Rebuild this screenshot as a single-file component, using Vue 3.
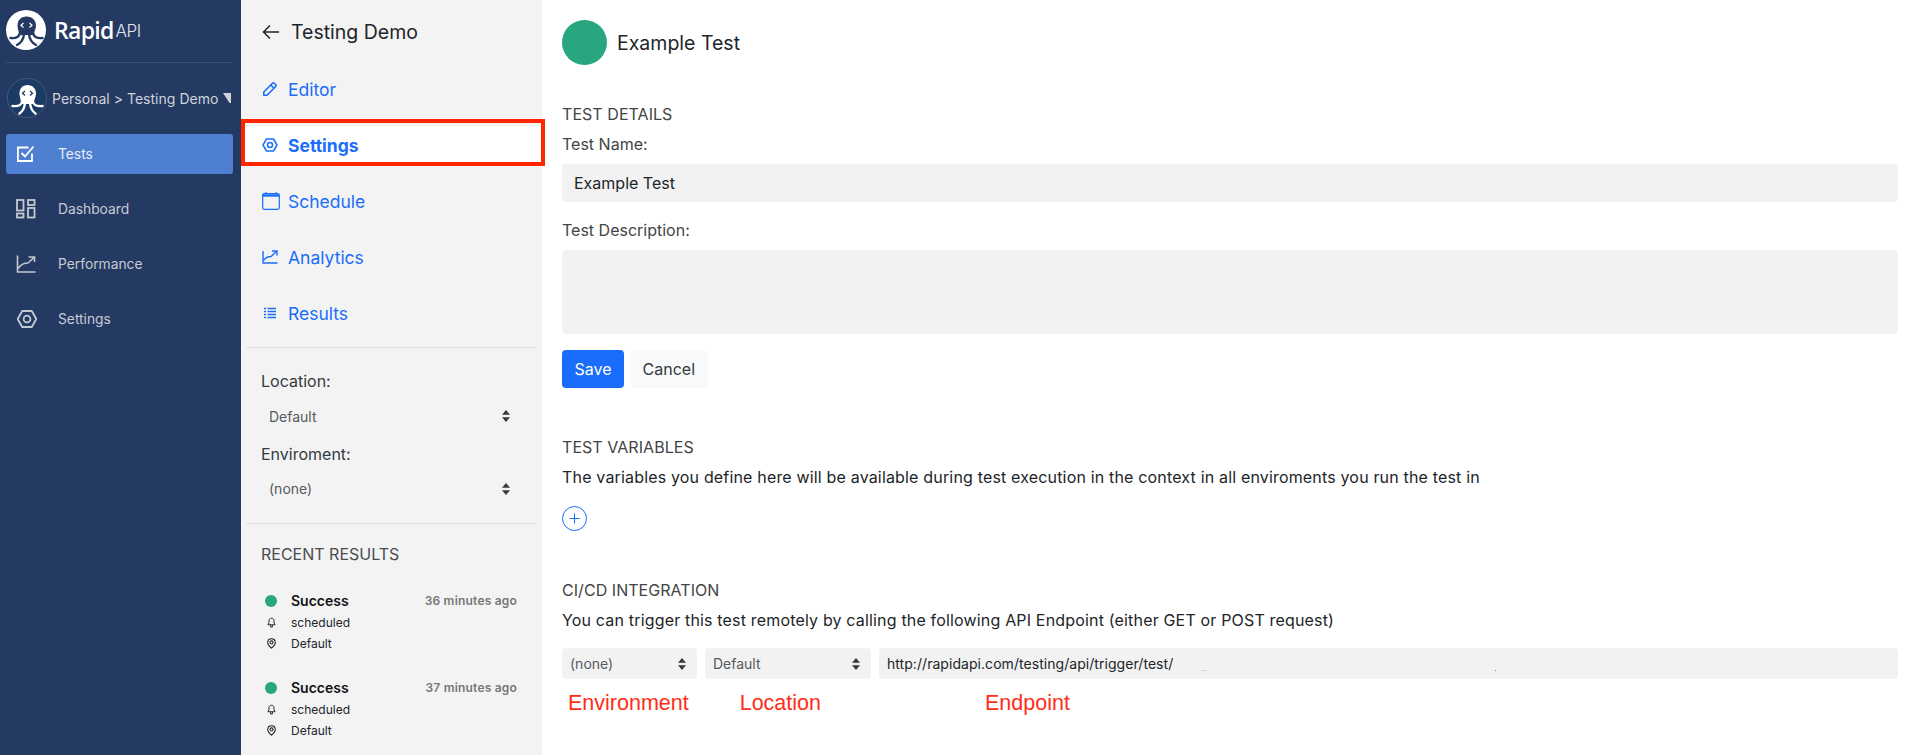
<script setup>
const navItems = [
  { label: 'Tests', icon: 'check', active: true },
  { label: 'Dashboard', icon: 'grid' },
  { label: 'Performance', icon: 'chart' },
  { label: 'Settings', icon: 'hex' },
]
const panelItems = [
  { label: 'Editor', icon: 'pencil' },
  { label: 'Settings', icon: 'hex', active: true },
  { label: 'Schedule', icon: 'calendar' },
  { label: 'Analytics', icon: 'chart' },
  { label: 'Results', icon: 'list' },
]
const results = [
  { status: 'Success', when: '36 minutes ago', trigger: 'scheduled', location: 'Default' },
  { status: 'Success', when: '37 minutes ago', trigger: 'scheduled', location: 'Default' },
]
</script>

<template>
  <div class="app">
    <aside class="sidebar">
      <div class="brand">
        <svg class="logo" viewBox="0 0 40 40">
          <circle cx="20" cy="20" r="20" fill="#fff" />
          <path d="M20.500 6.500C14.500 6.500 11.500 10.500 11.500 15.500C11.500 19 13 21 13 25H28C28 21 30 19 30 15.500C30 10.500 26.500 6.500 20.500 6.500Z" fill="#243a63" />
          <g fill="none" stroke="#243a63" stroke-width="2.400" stroke-linecap="round">
            <path d="M14 23C13 27.500 9 28.500 4.500 28" />
            <path d="M27 23C28 27.500 32 28.500 36.500 28" />
            <path d="M18 24C17.500 30 15 33 11 35" />
            <path d="M23 24C23.500 30 26 33 30 35" />
          </g>
          <g fill="none" stroke="#fff" stroke-width="1.300">
            <path d="M17.500 13L15 15.300L17.500 17.600" />
            <path d="M23.500 13L26 15.300L23.500 17.600" />
          </g>
        </svg>
        <span class="brand-name">Rapid</span>
        <span class="brand-api">API</span>
      </div>
      <div class="account">
        <svg class="avatar" viewBox="0 0 40 40">
          <circle cx="20" cy="20" r="19.600" fill="#1b3a64" stroke="#5a6d8a" stroke-width="0.600" />
          <path d="M20.500 7C15.500 7 12.500 10.500 12.500 15.500C12.500 19 14 21 14 26H27C27 21 29 19 29 15.500C29 10.500 25.500 7 20.500 7Z" fill="#fff" />
          <g fill="none" stroke="#fff" stroke-width="2.400" stroke-linecap="round">
            <path d="M15 24C14 27.500 10 28.500 5.500 28" />
            <path d="M26 24C27 27.500 31 28.500 35.500 28" />
            <path d="M18 25C17.500 30 15.500 33.500 12.500 35.500" />
            <path d="M23 25C23.500 30 25.500 33.500 28.500 35.500" />
          </g>
          <g fill="none" stroke="#1b3a64" stroke-width="1.300">
            <path d="M18 13L15.500 15.300L18 17.600" />
            <path d="M23 13L25.500 15.300L23 17.600" />
          </g>
        </svg>
        <span class="account-name">Personal &gt; Testing Demo</span>
        <svg class="account-caret" viewBox="0 0 8 10"><path d="M0 0H8V10H6.500Z" fill="#d0d3da" /></svg>
      </div>
      <nav class="nav">
        <a v-for="item in navItems" :key="item.label" class="nav-item" :class="{ active: item.active }">
          <span class="nav-icon">
            <svg v-if="item.icon === 'check'" width="20" height="20" viewBox="0 0 20 20" fill="none" stroke="#fff" stroke-width="1.800">
              <path d="M16 9.500V17H1.900V3.500H12.500" />
              <path d="M5.500 9L9 12.500L17.500 2.500" />
            </svg>
            <svg v-else-if="item.icon === 'grid'" width="20" height="20" viewBox="0 0 20 20" fill="none" stroke="#c6cad2" stroke-width="1.800">
              <rect x="1" y="1" width="6.500" height="10.500" />
              <rect x="12" y="1" width="6.500" height="5" />
              <rect x="1" y="14.500" width="6.500" height="4" />
              <rect x="12" y="9" width="6.500" height="9.500" />
            </svg>
            <svg v-else-if="item.icon === 'chart'" width="20" height="20" viewBox="0 0 20 20" fill="none" stroke="#c6cad2" stroke-width="1.600">
              <path d="M1.500 1.500V18H19.500" />
              <path d="M2 14.500C5 10 8 9 12 9L18 3.500" />
              <path d="M12.500 3H18.500V8" />
            </svg>
            <svg v-else width="22" height="20" viewBox="0 0 22 20" fill="none" stroke="#c6cad2" stroke-width="1.800">
              <path d="M6.200 2H15.800L20.300 10L15.800 18H6.200L1.700 10Z" stroke-linejoin="round" />
              <circle cx="11" cy="10" r="3.400" />
            </svg>
          </span>
          <span>{{ item.label }}</span>
        </a>
      </nav>
    </aside>

    <section class="panel">
      <header class="panel-head">
        <svg width="18" height="16" viewBox="0 0 18 16" fill="none" stroke="#212529" stroke-width="1.500">
          <path d="M17 8H1.500M8 1.500L1.500 8L8 14.500" />
        </svg>
        <h2 class="panel-title">Testing Demo</h2>
      </header>
      <nav class="panel-nav">
        <a v-for="item in panelItems" :key="item.label" class="panel-item" :class="{ active: item.active }">
          <span class="panel-icon">
            <svg v-if="item.icon === 'pencil'" width="16" height="16" viewBox="0 0 16 16" fill="none" stroke="#1a6dfb" stroke-width="1.600">
              <path d="M1.800 14.200V11L10.500 2.300C11 1.800 11.800 1.800 12.300 2.300L13.700 3.700C14.200 4.200 14.200 5 13.700 5.500L5 14.200Z" stroke-linejoin="round" />
              <path d="M8.700 4L12 7.300" />
            </svg>
            <svg v-else-if="item.icon === 'hex'" width="16" height="16" viewBox="0 0 16 16" fill="none" stroke="#1a6dfb" stroke-width="1.500">
              <path d="M4.500 2H11.500L15 8L11.500 14H4.500L1 8Z" stroke-linejoin="round" />
              <circle cx="8" cy="8" r="2.500" />
            </svg>
            <svg v-else-if="item.icon === 'calendar'" width="18" height="18" viewBox="0 0 18 18" fill="none" stroke="#1a6dfb" stroke-width="1.200">
              <rect x="0.700" y="1.700" width="16.600" height="15.600" rx="1.500" />
              <path d="M0.700 3.500H17.300" stroke-width="2.400" />
              <path d="M4 0V2M14 0V2" />
            </svg>
            <svg v-else-if="item.icon === 'chart'" width="16" height="14" viewBox="0 0 16 14" fill="none" stroke="#1a6dfb" stroke-width="1.400">
              <path d="M1 1V13H15.500" />
              <path d="M1.500 10.500C4 7 6 6.500 9 6.500L14.500 1.500" />
              <path d="M10 1H15V5.500" />
            </svg>
            <svg v-else class="ico-list" width="14" height="12" viewBox="0 0 14 12" fill="none" stroke="#1a6dfb" stroke-width="1.400">
              <path d="M1 1.500H3M1 4.500H3M1 7.500H3M1 10.500H3M4.500 1.500H13M4.500 4.500H13M4.500 7.500H13M4.500 10.500H13" />
            </svg>
          </span>
          <span>{{ item.label }}</span>
        </a>
      </nav>
      <div class="panel-divider"></div>
      <div class="panel-filters">
        <label class="filter-label">Location:</label>
        <div class="plain-select first">
          <span>Default</span>
          <svg width="8" height="12" viewBox="0 0 8 12" fill="#343a40"><path d="M4 0L8 4.700H0ZM4 12L0 7.300H8Z" /></svg>
        </div>
        <label class="filter-label second">Enviroment:</label>
        <div class="plain-select">
          <span>(none)</span>
          <svg width="8" height="12" viewBox="0 0 8 12" fill="#343a40"><path d="M4 0L8 4.700H0ZM4 12L0 7.300H8Z" /></svg>
        </div>
      </div>
      <div class="panel-divider lower"></div>
      <h3 class="recent-title">RECENT RESULTS</h3>
      <ul class="results">
        <li v-for="r in results" :key="r.when" class="result">
          <div class="result-row first">
            <span class="result-marker"><i class="dot"></i></span>
            <strong class="result-status">{{ r.status }}</strong>
            <span class="result-when">{{ r.when }}</span>
          </div>
          <div class="result-row">
            <span class="result-marker">
              <svg width="9" height="11" viewBox="0 0 10 11" fill="none" stroke="#212529" stroke-width="1.100">
                <path d="M1 8H9L7.800 6V3.500C7.800 1.800 6.500 0.800 5 0.800S2.200 1.800 2.200 3.500V6ZM4 8.500V10.500H6V8.500" />
              </svg>
            </span>
            <span>{{ r.trigger }}</span>
          </div>
          <div class="result-row">
            <span class="result-marker">
              <svg width="9" height="11" viewBox="0 0 10 12" fill="none" stroke="#212529" stroke-width="1.200">
                <path d="M5 11.200C3 9.500 0.800 7.500 0.800 4.800C0.800 2.400 2.700 0.700 5 0.700S9.200 2.400 9.200 4.800C9.200 7.500 7 9.500 5 11.200Z" />
                <circle cx="5" cy="4.800" r="1.700" />
              </svg>
            </span>
            <span>{{ r.location }}</span>
          </div>
        </li>
      </ul>
      <div class="highlight"></div>
    </section>

    <main class="main">
      <header class="test-head">
        <i class="test-dot"></i>
        <h1 class="test-title">Example Test</h1>
      </header>

      <h3 class="section-title details">TEST DETAILS</h3>
      <label class="field-label name">Test Name:</label>
      <div class="field input">Example Test</div>
      <label class="field-label desc">Test Description:</label>
      <div class="field textarea"></div>
      <div class="actions">
        <button class="btn primary">Save</button>
        <button class="btn secondary">Cancel</button>
      </div>

      <h3 class="section-title vars">TEST VARIABLES</h3>
      <p class="copy">The variables you define here will be available during test execution in the context in all enviroments you run the test in</p>
      <button class="add" aria-label="Add variable">
        <svg width="11" height="11" viewBox="0 0 11 11" stroke="#1a6dfb" stroke-width="1"><path d="M5.500 0.500V10.500M0.500 5.500H10.500" /></svg>
      </button>

      <h3 class="section-title cicd">CI/CD INTEGRATION</h3>
      <p class="copy">You can trigger this test remotely by calling the following API Endpoint (either GET or POST request)</p>
      <div class="endpoint-row">
        <div class="box env">
          <span>(none)</span>
          <svg width="8" height="12" viewBox="0 0 8 12" fill="#343a40"><path d="M4 0L8 4.700H0ZM4 12L0 7.300H8Z" /></svg>
        </div>
        <div class="box loc">
          <span>Default</span>
          <svg width="8" height="12" viewBox="0 0 8 12" fill="#343a40"><path d="M4 0L8 4.700H0ZM4 12L0 7.300H8Z" /></svg>
        </div>
        <div class="box url">http://rapidapi.com/testing/api/trigger/test/</div>
      </div>
      <div class="notes">
        <span class="note n-env">Environment</span>
        <span class="note n-loc">Location</span>
        <span class="note n-end">Endpoint</span>
      </div>
    </main>
  </div>
</template>

<style>
html, body { margin: 0; background: #fff; }
</style>

<style scoped>
.app {
  display: flex;
  height: 755px;
  overflow: hidden;
  font-family: Inter, "Liberation Sans", sans-serif;
  color: #212529;
  font-size: 16px;
}
h1, h2, h3, p, ul { margin: 0; padding: 0; font-weight: 400; }
li { list-style: none; }

.sidebar {
  width: 241px;
  flex: none;
  background: #243a63;
  padding: 0 8px 0 6px;
  box-sizing: border-box;
  color: #c6cad2;
  font-size: 14px;
}
.brand {
  display: flex;
  align-items: center;
  height: 63px;
  padding-bottom: 3px;
  box-sizing: border-box;
  border-bottom: 1px solid #3a4f76;
  color: #fff;
}
.logo { width: 40px; height: 40px; margin-right: 8px; }
.brand-name { font-family: "Open Sans", sans-serif; font-size: 23px; font-weight: 600; letter-spacing: -0.7px; }
.brand-api { font-size: 17px; font-weight: 300; margin-left: 2px; margin-top: 3px; letter-spacing: -0.5px; color: #e4e6ea; }
.account {
  display: flex;
  align-items: center;
  height: 40px;
  margin-top: 15px;
  padding-left: 1px;
}
.avatar { width: 40px; height: 40px; flex: none; margin-right: 5px; }
.account-name { white-space: nowrap; font-size: 14px; letter-spacing: 0.02px; color: #d0d3da; }
.account-caret { width: 8px; height: 10px; margin-left: 5px; }

.nav { display: flex; flex-direction: column; gap: 15px; margin-top: 16px; }
.nav-item {
  display: flex;
  align-items: center;
  height: 40px;
  padding-left: 10px;
  border-radius: 3px;
  font-size: 13.800px;
}
.nav-item.active { background: #4f7fd0; color: #e8edf7; }
.nav-icon { display: flex; width: 42px; flex: none; }

.panel {
  position: relative;
  width: 301px;
  flex: none;
  background: #f3f3f3;
}
.panel-head {
  display: flex;
  align-items: center;
  height: 64px;
  padding-left: 21px;
  gap: 11px;
}
.panel-title { font-size: 19.500px; font-weight: 400; color: #212529; }
.panel-nav { display: flex; flex-direction: column; gap: 18px; margin-top: 6px; }
.panel-item {
  display: flex;
  align-items: center;
  height: 38px;
  padding-left: 21px;
  font-size: 17.500px;
  color: #1a6dfb;
}
.panel-item.active { background: #fff; font-weight: 700; }
.panel-icon { display: flex; width: 26px; flex: none; }
.ico-list { margin-left: 1px; }
.panel-divider { height: 1px; margin: 15px 5px 0; background: #e2e2e2; }
.panel-divider.lower { margin-top: 0; }
.panel-filters { padding: 21px 20px 17px; }
.filter-label { display: block; line-height: 24px; height: 24px; color: #343a40; }
.filter-label.second { margin-top: 8.500px; }
.plain-select {
  display: flex;
  align-items: center;
  justify-content: space-between;
  height: 34px;
  margin-top: 6px;
  padding: 0 12px 0 8px;
  font-size: 14px;
  color: #555b61;
}
.recent-title { margin: 18px 0 0 20px; line-height: 24px; font-size: 16px; color: #4a4d50; }
.results { margin-top: 24.500px; }
.result { margin-bottom: 22.500px; }
.result-row {
  display: flex;
  align-items: center;
  height: 21.500px;
  padding-left: 24px;
  font-size: 12px;
  color: #212529;
}
.result-marker {
  display: flex;
  justify-content: center;
  align-items: center;
  width: 12px;
  margin-right: 14px;
}
.dot { width: 12px; height: 12px; border-radius: 50%; background: #27a680; }
.result-status { font-size: 14px; font-weight: 600; color: #111; }
.result-when { margin-left: auto; margin-right: 25px; font-weight: 600; letter-spacing: 0.2px; color: #777; }
.highlight {
  position: absolute;
  top: 119px;
  left: 0;
  width: 304px;
  height: 47px;
  box-sizing: border-box;
  border: 4px solid #ff2600;
  z-index: 2;
  pointer-events: none;
}

.main {
  flex: 1;
  min-width: 0;
  padding: 20px 19px 0 20px;
}
.test-head { display: flex; align-items: center; gap: 10px; }
.test-dot { width: 45px; height: 45px; border-radius: 50%; background: #27a680; }
.test-title { font-size: 19.500px; font-weight: 400; color: #212529; }
.section-title { line-height: 24px; font-size: 16px; letter-spacing: 0.05px; color: #444; }
.section-title.details { margin-top: 37px; }
.section-title.vars, .section-title.cicd { margin-top: 47px; }
.field-label { display: block; line-height: 24px; color: #444; }
.field-label.name { margin-top: 6px; }
.field-label.desc { margin-top: 16px; }
.field { margin-top: 8px; background: #f2f2f2; border-radius: 4px; box-sizing: border-box; }
.input { height: 38px; padding: 0 12px; line-height: 38px; color: #212529; }
.textarea { height: 84px; }
.actions { display: flex; gap: 6px; margin-top: 16px; }
.btn {
  height: 38px;
  padding: 0 12.500px;
  border: 0;
  border-radius: 4px;
  font: inherit;
}
.btn.primary { background: #1a6dfb; color: #fff; }
.btn.secondary { background: #f8f9fa; color: #343a40; }
.copy { margin-top: 6px; line-height: 24px; letter-spacing: 0.17px; color: #212529; }
.add {
  display: flex;
  align-items: center;
  justify-content: center;
  width: 25px;
  height: 25px;
  margin-top: 17px;
  padding: 0;
  background: #fff;
  border: 1px solid #1a6dfb;
  border-radius: 50%;
}
.endpoint-row { display: flex; gap: 8px; margin-top: 16px; }
.box {
  display: flex;
  align-items: center;
  height: 31px;
  box-sizing: border-box;
  padding: 0 8px;
  background: #f2f2f2;
  border-radius: 4px;
  font-size: 14px;
  color: #555b61;
}
.box svg { margin-left: auto; margin-right: 3px; }
.env { width: 135px; }
.loc { width: 166px; }
.url { position: relative; flex: 1; letter-spacing: 0.05px; color: #212529; }
.url::before, .url::after {
  content: "";
  position: absolute;
  top: 22px;
  height: 1px;
  background: #d6d6d6;
}
.url::before { left: 322px; width: 6px; }
.url::after { left: 616px; width: 1px; background: #888; }
.notes { display: flex; margin-top: 11px; line-height: 26px; }
.note { font-family: "Liberation Sans", Arial, sans-serif; font-size: 21.500px; color: #ff2d16; }
.n-env { margin-left: 6px; }
.n-loc { margin-left: 51px; }
.n-end { margin-left: 164px; }
</style>
